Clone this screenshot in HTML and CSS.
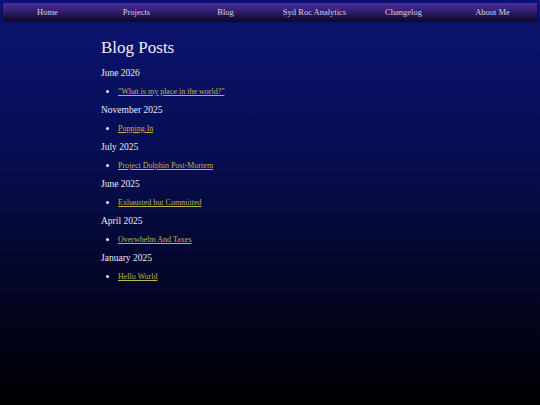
FILE: index.html
```
<!DOCTYPE html>
<html>
<head>
<meta charset="utf-8">
<link rel="stylesheet" href="styles.css">
</head>
<body>
<nav class="nav">
  <a class="nav-item" href="#">Home</a>
  <a class="nav-item" href="#">Projects</a>
  <a class="nav-item" href="#">Blog</a>
  <a class="nav-item" href="#">Syd Roc Analytics</a>
  <a class="nav-item" href="#">Changelog</a>
  <a class="nav-item" href="#">About Me</a>
</nav>
<main class="content">
  <h1 class="title">Blog Posts</h1>
  <section class="group">
    <h3 class="month">June 2026</h3>
    <ul class="posts"><li><a href="#">"What is my place in the world?"</a></li></ul>
  </section>
  <section class="group">
    <h3 class="month">November 2025</h3>
    <ul class="posts"><li><a href="#">Popping In</a></li></ul>
  </section>
  <section class="group">
    <h3 class="month">July 2025</h3>
    <ul class="posts"><li><a href="#">Project Dolphin Post-Mortem</a></li></ul>
  </section>
  <section class="group">
    <h3 class="month">June 2025</h3>
    <ul class="posts"><li><a href="#">Exhausted but Committed</a></li></ul>
  </section>
  <section class="group">
    <h3 class="month">April 2025</h3>
    <ul class="posts"><li><a href="#">Overwhelm And Taxes</a></li></ul>
  </section>
  <section class="group">
    <h3 class="month">January 2025</h3>
    <ul class="posts"><li><a href="#">Hello World</a></li></ul>
  </section>
</main>
</body>
</html>
```
FILE: styles.css
```
html, body {
  margin: 0;
  padding: 0;
  height: 100%;
}
body {
  background: linear-gradient(to bottom, #0b1474 0%, #070d50 40%, #030626 70%, #000 100%);
  font-family: "Liberation Serif", serif;
  color: #ececf4;
  min-height: 405px;
}
.nav {
  margin: 3px 3px 0 3px;
  height: 18px;
  display: grid;
  grid-template-columns: repeat(6, 1fr);
  align-items: center;
  background: linear-gradient(to bottom, #4a2c9e 0%, #321f70 45%, #0e0826 100%);
  box-shadow: 0 1px 2px rgba(0,0,0,0.5);
}
.nav-item {
  text-align: center;
  color: #d4d2e4;
  text-decoration: none;
  font-size: 8.5px;
}
.content {
  padding: 0 0 0 101px;
}
.title {
  font-size: 17px;
  font-weight: normal;
  margin: 17px 0 6px 0;
  line-height: 20px;
}
.group {
  height: 37px;
}
.month {
  font-size: 9.5px;
  font-weight: normal;
  margin: 0;
  line-height: 18px;
}
.posts {
  margin: 0;
  padding-left: 17px;
  font-size: 8px;
  line-height: 18px;
}
.posts li::marker {
  font-size: 9px;
}
.posts a {
  color: #bcb44c;
}
```
